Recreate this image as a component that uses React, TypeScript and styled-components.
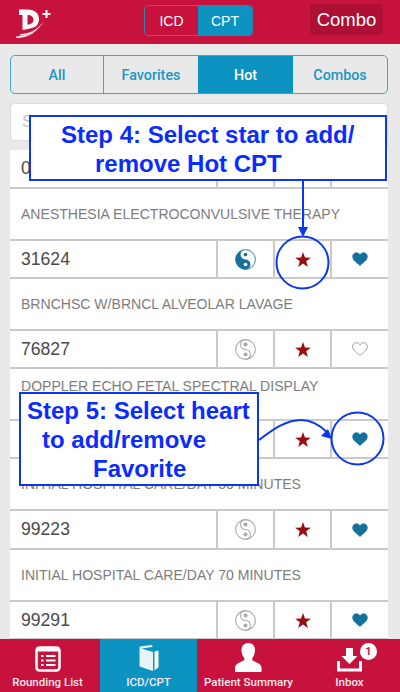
import styled, { createGlobalStyle } from "styled-components";

const GlobalStyle = createGlobalStyle`
  html, body {
    margin: 0;
    padding: 0;
    background: #e9e9e9;
  }
  * {
    box-sizing: border-box;
  }
`;

const Screen = styled.div`
  position: relative;
  width: 400px;
  height: 692px;
  display: flex;
  flex-direction: column;
  overflow: hidden;
  background: #e9e9e9;
  font-family: "Liberation Sans", Arial, sans-serif;
`;

const Header = styled.header`
  flex: none;
  height: 44px;
  background: #c6123d;
  display: grid;
  grid-template-columns: 144px 109px 57px 73px;
  align-items: start;
  padding-top: 5px;
`;

const LogoWrap = styled.div`
  padding: 3px 0 0 15px;
`;

const Switch = styled.div`
  height: 31px;
  display: grid;
  grid-template-columns: 53px 1fr;
  border: 1px solid #2f86ad;
  border-radius: 4px;
  overflow: hidden;
`;

const SwitchItem = styled.div<{ $active?: boolean }>`
  display: flex;
  align-items: center;
  justify-content: center;
  font-size: 14px;
  color: #fff;
  background: ${(props) => (props.$active ? "#0c93c2" : "#c6123d")};
`;

const ComboButton = styled.div`
  grid-column: 4;
  height: 31px;
  margin-top: -1px;
  display: flex;
  align-items: center;
  justify-content: center;
  font-size: 18.5px;
  color: #fff;
  background: #ae0f35;
  border-radius: 4px;
`;

const Main = styled.main`
  flex: 1;
  min-height: 0;
  overflow: hidden;
  padding: 11px 12px 0 10px;
`;

const FilterTabs = styled.div`
  height: 39px;
  display: grid;
  grid-template-columns: 93px 94px 95px 1fr;
  border: 1px solid #3ba7cd;
  border-radius: 5px;
  overflow: hidden;
`;

const FilterTab = styled.div<{ $active?: boolean; $bordered?: boolean }>`
  display: flex;
  align-items: center;
  justify-content: center;
  font-family: Roboto, "Liberation Sans", sans-serif;
  font-size: 14.3px;
  font-weight: 500;
  color: ${(props) => (props.$active ? "#fff" : "#1a97c4")};
  background: ${(props) => (props.$active ? "#0c93c2" : "transparent")};
  border-right: ${(props) => (props.$bordered ? "1px solid #3ba7cd" : "none")};
`;

const SearchBox = styled.div`
  height: 38px;
  margin-top: 9px;
  padding: 0 11px;
  display: flex;
  align-items: center;
  justify-content: space-between;
  background: #fff;
  border: 1px solid #dcdcdc;
  border-radius: 4px;
  font-size: 16px;
  color: #c4c4c4;
`;

const SearchClear = styled.span`
  width: 14px;
  height: 14px;
  border: 1px solid #c8c8c8;
  border-radius: 50%;
`;

const List = styled.div`
  margin-top: 9px;
  background: #fff;
  width: 378px;
`;

const TitleRow = styled.div<{ $raised?: boolean }>`
  height: 52px;
  padding: 0 11px ${(props) => (props.$raised ? "16px" : "0")};
  display: flex;
  align-items: center;
  font-size: 14.05px;
  color: #7d7d7d;
  border-bottom: 2px solid #cacaca;
  white-space: nowrap;
`;

const CodeRow = styled.div<{ $tall?: boolean }>`
  height: ${(props) => (props.$tall ? "39px" : "38px")};
  display: grid;
  grid-template-columns: 206px 57px 57px 1fr;
  border-bottom: 2px solid #cacaca;
`;

const Code = styled.div`
  display: flex;
  align-items: center;
  padding-left: 11px;
  font-size: 17.6px;
  color: #4a4a4a;
`;

const IconCell = styled.div`
  display: flex;
  align-items: center;
  justify-content: center;
  border-left: 2px solid #cacaca;
`;

const TabBar = styled.nav`
  flex: none;
  height: 53px;
  display: grid;
  grid-template-columns: 100px 97px 105px 1fr;
  background: #c6123d;
`;

const TabItem = styled.div<{ $active?: boolean; $shift?: number }>`
  position: relative;
  display: flex;
  flex-direction: column;
  align-items: center;
  justify-content: flex-end;
  gap: 3px;
  padding: 0 ${(props) => props.$shift ?? 0}px 3px 0;
  font-family: Roboto, "Liberation Sans", sans-serif;
  font-size: 11.5px;
  font-weight: 500;
  color: #fbeaee;
  background: ${(props) => (props.$active ? "#0c93c2" : "transparent")};
`;

const Badge = styled.span`
  position: absolute;
  top: 4px;
  right: 23px;
  width: 17px;
  height: 17px;
  display: flex;
  align-items: center;
  justify-content: center;
  border-radius: 50%;
  background: #fff;
  color: #b8274a;
  font-size: 11px;
  font-weight: 700;
`;

const Callout = styled.div<{
  $top: number;
  $left: number;
  $width: number;
  $height: number;
  $pad: number;
}>`
  position: absolute;
  top: ${(props) => props.$top}px;
  left: ${(props) => props.$left}px;
  width: ${(props) => props.$width}px;
  height: ${(props) => props.$height}px;
  padding-top: ${(props) => props.$pad}px;
  background: #fff;
  border: 2px solid #0b37ee;
  color: #0a2cff;
  font-size: 24px;
  font-weight: 700;
  line-height: 29px;
`;

const CalloutLine = styled.div<{ $indent: number }>`
  padding-left: ${(props) => props.$indent}px;
  white-space: nowrap;
`;

const Annotations = styled.svg`
  position: absolute;
  top: 0;
  left: 0;
  width: 400px;
  height: 692px;
  pointer-events: none;
`;

const Star = () => (
  <svg width="16" height="15" viewBox="0 0 24 23">
    <path d="M12 0l3 8.400 9 .3-7.100 5.500 2.500 8.800L12 17.800 4.600 23l2.500-8.800L0 8.700l9-.3z" fill="#980d0f" />
  </svg>
);

const Heart = ({ filled }: { filled: boolean }) => (
  <svg width="16" height="14" viewBox="0 0 24 21">
    <path
      d="M12 20.200C8 16.800 1 12.500 1 6.800 1 3.500 3.500 1 6.600 1 8.900 1 10.900 2.200 12 4.300 13.100 2.200 15.100 1 17.400 1 20.500 1 23 3.500 23 6.800c0 5.700-7 10-11 13.400z"
      fill={filled ? "#15719c" : "#fff"}
      stroke={filled ? "#15719c" : "#8e8e8e"}
      strokeWidth={filled ? 1 : 1.300}
    />
  </svg>
);

const YinYang = ({ filled }: { filled: boolean }) =>
  filled ? (
    <svg width="21" height="21" viewBox="0 0 24 24">
      <circle cx="12" cy="12" r="11.300" fill="#fff" stroke="#15719c" strokeWidth="1" />
      <path d="M12 .7a11.300 11.300 0 0 0 0 22.600 5.650 5.650 0 0 0 0-11.300 5.650 5.650 0 0 1 0-11.300z" fill="#15719c" />
      <circle cx="12" cy="6.300" r="2.100" fill="#15719c" />
      <circle cx="12" cy="17.700" r="2.100" fill="#fff" />
    </svg>
  ) : (
    <svg width="21" height="21" viewBox="0 0 24 24" fill="none">
      <circle cx="12" cy="12" r="11.300" stroke="#a9a9a9" strokeWidth="1.200" />
      <path d="M12 .7a5.650 5.650 0 0 0 0 11.300 5.650 5.650 0 0 1 0 11.300" stroke="#a9a9a9" strokeWidth="1.200" />
      <circle cx="12" cy="6.300" r="2.300" fill="#a9a9a9" />
      <circle cx="12" cy="17.700" r="2.300" fill="#a9a9a9" />
    </svg>
  );

const Logo = () => (
  <svg width="36" height="30" viewBox="0 0 36 30">
    <path
      d="M4 1.500h8.500c7 0 11.500 3.700 11.500 9.500 0 3-1 5.300-3 7.200-3.500 1.800-8 3-12.500 3.500H7.500V7H4zM12.500 7v9.500c3.500 0 6-2 6-4.800 0-3-2.500-4.700-6-4.700z"
      fill="#fff"
      fillRule="evenodd"
    />
    <path d="M1 30c10 .5 21-4 29-19-7 12-17 16-29 17.500z" fill="#f7d5dd" />
    <path d="M5 26c9 0 17-4 22-11-4 8-12 12-22 12.500z" fill="#f7d5dd" />
    <path d="M30.500 2h2v3h3v2h-3v3h-2V7h-3V5h3z" fill="#fff" />
  </svg>
);

const RoundingIcon = () => (
  <svg width="26" height="26" viewBox="0 0 26 26">
    <rect x="1.500" y="1.500" width="23" height="23" rx="3" fill="none" stroke="#fff" strokeWidth="2.500" />
    <rect x="1.500" y="1.500" width="23" height="4" fill="#fff" />
    <path d="M6 10h2.500M6 14.500h2.500M6 19h2.500M11 10h9.500M11 14.500h9.500M11 19h9.500" stroke="#fff" strokeWidth="2.200" />
  </svg>
);

const BookIcon = () => (
  <svg width="22" height="28" viewBox="0 0 22 28">
    <path d="M2 2.500L13 1c1 0 1.500 .5 1.500 1.500v.5L3.500 4.500 15 8v19L3 23c-1 -.4-1.500-1-1.500-2V3z" fill="#fff" opacity=".9" />
    <path d="M16.500 7.500l3-1c.5 0 1 .3 1 1V23l-4 3.500z" fill="#fff" />
  </svg>
);

const PersonIcon = () => (
  <svg width="27" height="29" viewBox="0 0 27 29">
    <path d="M13.500 0c4 0 6.500 3 6.500 7 0 3-1 6-2.500 7.800-.7 1-.5 2.500 1 3.200 3.500 1.500 8 3 8 7V29H0v-4c0-4 4.500-5.500 8-7 1.500-.7 1.700-2.200 1-3.200C7.500 13 6.500 10 6.500 7c0-4 2.500-7 7-7z" fill="#fff" />
  </svg>
);

const InboxIcon = () => (
  <svg width="25" height="25" viewBox="0 0 25 25">
    <path d="M9 1h7v8h4.500l-8 8-8-8H9z" fill="#fff" />
    <path d="M1.500 14v9h22v-9" fill="none" stroke="#fff" strokeWidth="3" />
  </svg>
);

// codes that sit fully under a callout are left out, only the visible part is kept
const ROWS = [
  { code: "0", title: "ANESTHESIA ELECTROCONVULSIVE THERAPY", yin: false, heart: true, tall: true },
  { code: "31624", title: "BRNCHSC W/BRNCL ALVEOLAR LAVAGE", yin: true, heart: true },
  { code: "76827", title: "DOPPLER ECHO FETAL SPECTRAL DISPLAY", yin: false, heart: false, raised: true },
  { code: "", title: "INITIAL HOSPITAL CARE/DAY 50 MINUTES", yin: false, heart: true },
  { code: "99223", title: "INITIAL HOSPITAL CARE/DAY 70 MINUTES", yin: false, heart: true, tall: true },
  { code: "99291", title: "", yin: false, heart: true },
];

export default function App() {
  return (
    <Screen>
      <GlobalStyle />
      <Header>
        <LogoWrap>
          <Logo />
        </LogoWrap>
        <Switch>
          <SwitchItem>ICD</SwitchItem>
          <SwitchItem $active>CPT</SwitchItem>
        </Switch>
        <ComboButton>Combo</ComboButton>
      </Header>

      <Main>
        <FilterTabs>
          <FilterTab $bordered>All</FilterTab>
          <FilterTab>Favorites</FilterTab>
          <FilterTab $active>Hot</FilterTab>
          <FilterTab>Combos</FilterTab>
        </FilterTabs>
        <SearchBox>
          Search
          <SearchClear />
        </SearchBox>
        <List>
          {ROWS.map((row, index) => (
            <div key={index}>
              <CodeRow $tall={row.tall}>
                <Code>{row.code}</Code>
                <IconCell>
                  <YinYang filled={row.yin} />
                </IconCell>
                <IconCell>
                  <Star />
                </IconCell>
                <IconCell>
                  <Heart filled={row.heart} />
                </IconCell>
              </CodeRow>
              {row.title && <TitleRow $raised={row.raised}>{row.title}</TitleRow>}
            </div>
          ))}
        </List>
      </Main>

      <TabBar>
        <TabItem $shift={5}>
          <RoundingIcon />
          Rounding List
        </TabItem>
        <TabItem $active>
          <BookIcon />
          ICD/CPT
        </TabItem>
        <TabItem $shift={2}>
          <PersonIcon />
          Patient Summary
        </TabItem>
        <TabItem $shift={3}>
          <InboxIcon />
          Inbox
          <Badge>1</Badge>
        </TabItem>
      </TabBar>

      <Callout $top={115} $left={29} $width={358} $height={66} $pad={3}>
        <CalloutLine $indent={30}>Step 4: Select star to add/</CalloutLine>
        <CalloutLine $indent={64}>remove Hot CPT</CalloutLine>
      </Callout>

      <Callout $top={392} $left={19} $width={240} $height={94} $pad={2}>
        <CalloutLine $indent={6}>Step 5: Select heart</CalloutLine>
        <CalloutLine $indent={21}>to add/remove</CalloutLine>
        <CalloutLine $indent={72}>Favorite</CalloutLine>
      </Callout>

      <Annotations viewBox="0 0 400 692" fill="none">
        <path d="M303 181v48" stroke="#0b37ee" strokeWidth="2" />
        <path d="M298 227h10l-5 10z" fill="#0b37ee" />
        <circle cx="302.500" cy="262.500" r="26" stroke="#0b37ee" strokeWidth="2" />
        <circle cx="357.500" cy="438.500" r="26" stroke="#0b37ee" strokeWidth="2" />
        <path d="M259 440c12-9 26-20 42-20 12 0 20 6 27 13" stroke="#0b37ee" strokeWidth="2" />
        <path d="M332 439l-11-3 7-7z" fill="#0b37ee" />
      </Annotations>
    </Screen>
  );
}
